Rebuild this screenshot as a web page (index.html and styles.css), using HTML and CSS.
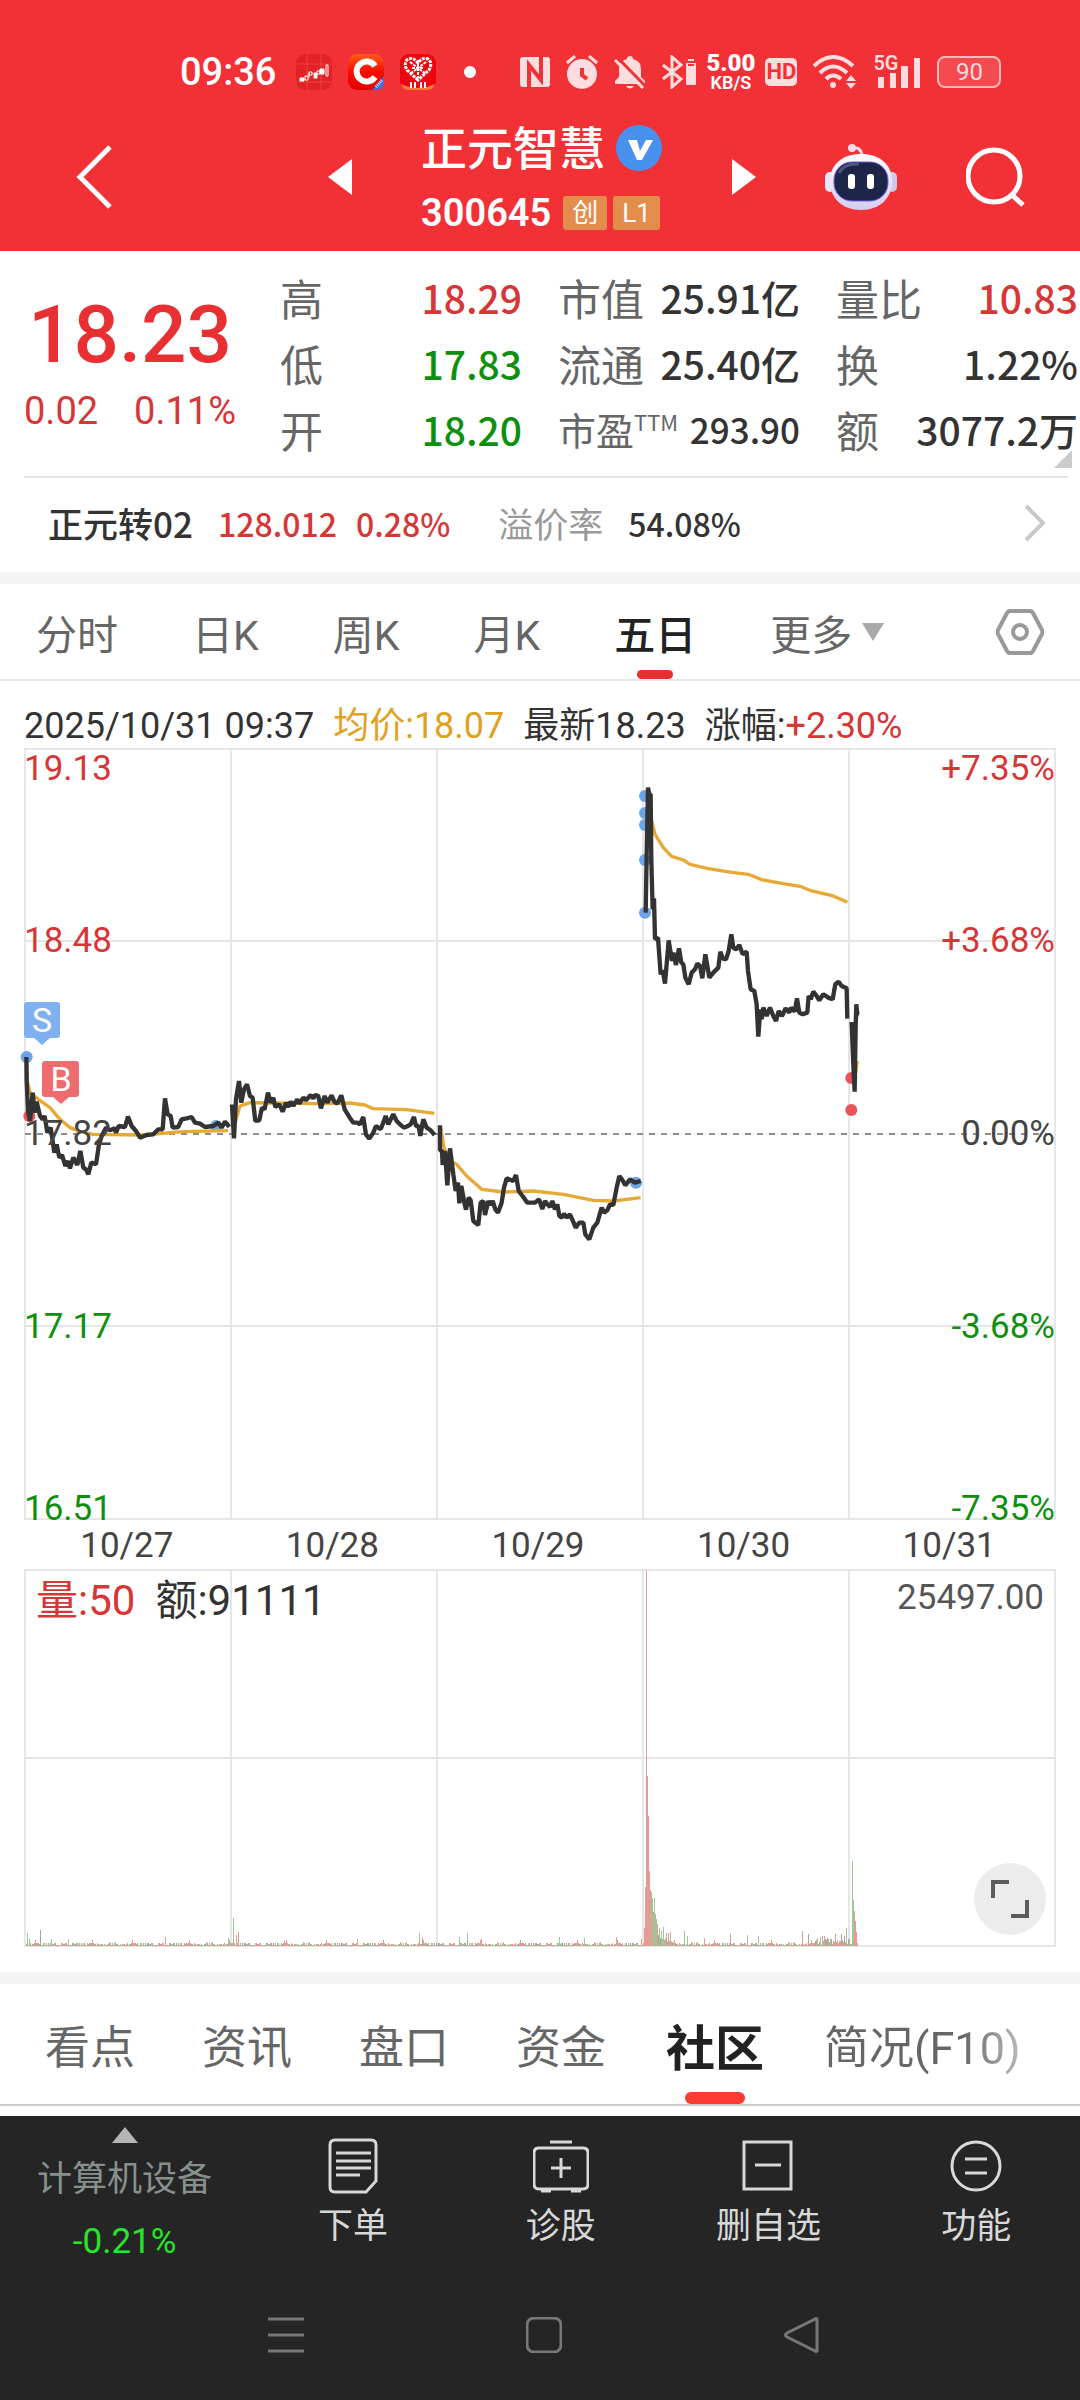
FILE: index.html
```html
<!DOCTYPE html>
<html lang="zh-CN">

<head>
    <meta charset="UTF-8">
    <meta name="viewport" content="width=device-width, initial-scale=1.0">
    <title>正元智慧 300645</title>
    <link rel="stylesheet" href="styles.css">
</head>

<body>

    <!-- Red header: status bar + stock title -->
    <header class="top">
        <div class="status-bar">
            <span class="clock">09:36</span>
            <svg class="app-icon" viewBox="0 0 36 36">
                <rect width="36" height="36" rx="9" fill="#e32227" />
                <path d="M0 10h36M0 28h36M11 0v36M25 0v36" stroke="#ea4044" stroke-width="1" />
                <path d="M4 24h4v3H4zM13 19v5M18 19h3v5h-3zM24 15h4v5h-4z" fill="#fff" stroke="#fff" />
                <path d="M9 22h3v4H9zM13 18h3v3h-3zM21 17h3v3h-3zM30 11h2v11h-2z" fill="none" stroke="#fff" />
            </svg>
            <svg class="app-icon" viewBox="0 0 36 36">
                <defs>
                    <linearGradient id="orange" x1="0" y1="0" x2="0" y2="1">
                        <stop offset="0" stop-color="#ff5a1c" />
                        <stop offset=".5" stop-color="#f80d00" />
                        <stop offset="1" stop-color="#e60000" />
                    </linearGradient>
                </defs>
                <rect width="36" height="36" rx="9" fill="url(#orange)" />
                <path d="M27 12a10 10 0 1 0 0 11" fill="none" stroke="#fff" stroke-width="6" />
                <path d="M36 22v6q0 8-8 8h-4z" fill="#3f6fe0" />
                <path d="M28 33l6-7" stroke="#c9d8ff" stroke-width="3" stroke-dasharray="1 1" />
            </svg>
            <svg class="app-icon" viewBox="0 0 36 36">
                <rect width="36" height="36" rx="9" fill="#ee0510" />
                <path d="M1 30q17 8 34 0-2 6-8 6H9q-6 0-8-6z" fill="#ff7a3c" />
                <path d="M18 26L7 16q-4-7 1-11 6-2 10 4 4-6 10-4 5 4 1 11z" fill="none" stroke="#fff" stroke-width="3" stroke-dasharray="3 1" />
                <path d="M10 8l16 12M26 8L10 20M12 14h12M18 10v14" stroke="#fff" stroke-width="2" stroke-dasharray="3 1" />
                <path d="M11 28v6M15 28v6M21 28v6M25 28v6" stroke="#fff" stroke-width="2" />
            </svg>
            <span class="dot"></span>
            <svg class="st nfc" viewBox="0 0 30 30">
                <rect width="30" height="30" rx="3" />
                <path d="M9 30V8l12 15V0" fill="none" stroke="#f23137" stroke-width="4" />
            </svg>
            <svg class="st" viewBox="0 0 32 34">
                <circle cx="16" cy="19" r="15" />
                <path d="M1 8l8-7M31 8l-8-7" stroke="#ffdcdd" stroke-width="3" />
                <path d="M16 13v7l5 4" fill="none" stroke="#f23137" stroke-width="4" />
            </svg>
            <svg class="st" viewBox="0 0 32 34">
                <path d="M1 29v-3l4-4v-8q0-8 8-10 0-3 3-3t3 3q8 2 8 10v8l4 4v3zM12 31h8q-4 5-8 0z" />
                <path d="M3 2l29 30" stroke="#f23137" stroke-width="3" />
                <path d="M1 5l28 28" stroke="#ffdcdd" stroke-width="3" />
            </svg>
            <svg class="st bt" viewBox="0 0 34 34">
                <path d="M1 10l18 14-9 8V2l9 8L1 24" fill="none" stroke="#ffdcdd" stroke-width="3" />
                <path d="M26 4h6v2h-6zM24 8h10v22H24z" />
                <path d="M26 10h6" stroke="#f23137" stroke-width="2" />
            </svg>
            <span class="net-speed"><b>5.00</b>KB/S</span>
            <span class="hd">HD</span>
            <svg class="st wifi" viewBox="0 0 44 34">
                <path d="M1 11q19-18 39 0M7 18q13-13 27 0M13 24q7-7 15 0" fill="none" stroke="#ffdcdd" stroke-width="4" />
                <circle cx="20" cy="30" r="3" />
                <path d="M33 26l5-6 5 6zM33 28h10l-5 6z" />
            </svg>
            <span class="signal">
                <small>5G</small>
                <svg viewBox="0 0 48 34">
                    <path d="M5 22h6v11H5zM17 18h6v15h-6zM28 11h7v22h-7zM41 3h6v30h-6z" fill="#ffdcdd" />
                </svg>
            </span>
            <span class="battery">90</span>
        </div>

        <div class="title-bar">
            <button class="icon-btn back" aria-label="返回">
                <svg width="36" height="64" viewBox="0 0 36 64"><path d="M34 2L4 32l30 30" fill="none" stroke="#fff" stroke-width="5" /></svg>
            </button>
            <button class="icon-btn" aria-label="上一只">
                <svg width="24" height="36" viewBox="0 0 24 36"><path d="M24 0v36L0 18z" fill="#fff" /></svg>
            </button>
            <div class="stock">
                <h1>正元智慧
                    <svg width="47" height="47" viewBox="0 0 47 47">
                        <circle cx="23" cy="23" r="23" fill="#4891ee" />
                        <path d="M12 15h9l3 11 6-11h7L26 35h-5z" fill="#fff" />
                    </svg>
                </h1>
                <p><span class="num">300645</span><span class="tag">创</span><span class="tag">L1</span></p>
            </div>
            <button class="icon-btn" aria-label="下一只">
                <svg width="24" height="36" viewBox="0 0 24 36"><path d="M0 0v36l24-18z" fill="#fff" /></svg>
            </button>
            <button class="icon-btn" aria-label="智能助手">
                <svg width="72" height="68" viewBox="0 0 72 68">
                    <defs>
                        <linearGradient id="shell" x1="0" y1="0" x2="0" y2="1">
                            <stop offset="0" stop-color="#fff" />
                            <stop offset="1" stop-color="#d3cdf0" />
                        </linearGradient>
                    </defs>
                    <path d="M27 5q9-2 10 8" fill="none" stroke="#f3dcea" stroke-width="3" />
                    <circle cx="27" cy="5" r="4" fill="#f7dbe8" />
                    <rect y="29" width="10" height="20" rx="5" fill="#e7e6f8" />
                    <rect x="62" y="29" width="10" height="20" rx="5" fill="#cfc9ee" />
                    <path d="M36 11C54 11 67 21 67 38S55 67 36 67 5 55 5 38 18 11 36 11z" fill="url(#shell)" />
                    <rect x="9" y="19" width="54" height="39" rx="18" fill="#1d2549" stroke="#7a5be0" stroke-width="1" />
                    <path d="M14 30q5-10 20-9" fill="none" stroke="#4b5680" stroke-width="3" />
                    <rect x="23" y="31" width="7" height="15" rx="3" fill="#fff" />
                    <rect x="42" y="31" width="7" height="15" rx="3" fill="#fff" />
                </svg>
            </button>
            <button class="icon-btn" aria-label="搜索">
                <svg width="60" height="60" viewBox="0 0 60 60">
                    <circle cx="28" cy="29" r="26" fill="none" stroke="#fff" stroke-width="5" />
                    <path d="M46 48l11 10" stroke="#fff" stroke-width="5" />
                </svg>
            </button>
        </div>
    </header>

    <!-- Quote figures -->
    <section class="quote">
        <div class="price up">
            <strong>18.23</strong>
            <p><span>0.02</span><span>0.11%</span></p>
        </div>
        <dl class="facts">
            <div><dt>高</dt><dd class="num up">18.29</dd></div>
            <div><dt>低</dt><dd class="num down">17.83</dd></div>
            <div><dt>开</dt><dd class="num down">18.20</dd></div>
        </dl>
        <dl class="facts">
            <div><dt>市值</dt><dd class="num">25.91亿</dd></div>
            <div><dt>流通</dt><dd class="num">25.40亿</dd></div>
            <div class="small"><dt>市盈<sup>TTM</sup></dt><dd class="num">293.90</dd></div>
        </dl>
        <dl class="facts">
            <div><dt>量比</dt><dd class="num up">10.83</dd></div>
            <div><dt>换</dt><dd class="num">1.22%</dd></div>
            <div><dt>额</dt><dd class="num">3077.2万</dd></div>
        </dl>
        <span class="corner"></span>
    </section>

    <!-- Convertible bond -->
    <a class="bond" href="#bond">
        <span class="bond-name">正元转02</span>
        <span class="num up">128.012</span>
        <span class="num up bond-rate">0.28%</span>
        <span class="muted">溢价率</span>
        <span class="num">54.08%</span>
        <svg width="22" height="38" viewBox="0 0 22 38"><path d="M2 2l17 17L2 36" fill="none" stroke="#c8c8c8" stroke-width="4" /></svg>
    </a>

    <nav class="period-tabs">
        <button>分时</button>
        <button>日K</button>
        <button>周K</button>
        <button>月K</button>
        <button class="active">五日</button>
        <button class="more">更多<svg width="22" height="18" viewBox="0 0 22 18"><path d="M0 0h22L11 18z" fill="#a9a9a9" /></svg></button>
        <button class="settings" aria-label="设置">
            <svg width="48" height="46" viewBox="0 0 48 46">
                <path d="M14 2h20q2 0 3 2l9 17q1 2 0 4l-9 17q-1 2-3 2H14q-2 0-3-2L2 25q-1-2 0-4l9-17q1-2 3-2z" fill="none" stroke="#999" stroke-width="4" />
                <circle cx="24" cy="23" r="7" fill="none" stroke="#999" stroke-width="4" />
            </svg>
        </button>
    </nav>

    <!-- Five day chart -->
    <main class="charts">
        <p class="chart-info">
            <span>2025/10/31 09:37</span>
            <span class="avg">均价:18.07</span>
            <span>最新18.23</span>
            <span>涨幅:<em>+2.30%</em></span>
        </p>

        <svg class="chart" viewBox="0 0 1032 772">
            <path class="grid" d="M1 1h1030v770H1zM1 193h1030M1 578h1030M207 1v770M413 1v770M619 1v770M825 1v770" />
            <path class="zero" d="M1 386h1030" />

            <!-- three units to a pixel inside these groups -->
            <g class="day" transform="translate(-24 233) scale(.3333)">
                <circle class="sell" cx="80" cy="228" r="18" />
                <circle class="buy" cx="88" cy="405" r="18" />
                <circle class="sell" cx="648" cy="435" r="18" />
                <polyline class="avg-line" points="80,240 82,300 90,335 115,355 150,380 180,415 210,440 240,452 280,460 420,462 500,456 550,452 684,449" />
                <polyline class="avg-line" points="702,440 710,410 720,375 750,365 950,368 1050,366 1095,372 1120,383 1220,386 1303,397" />
                <polyline class="price-line" points="79,228 80,300 84,390 90,420 98,335 104,395 110,362 120,405 128,415 134,405 142,455 152,440 163,515 170,490 178,530 186,522 196,555 204,540 210,562 220,530 232,552 241,510 250,560 258,565 265,580 274,545 288,550 297,490 305,465 318,440 330,448 345,442 348,455 356,435 375,438 384,407 395,435 408,450 420,470 440,462 460,460 475,445 488,445 495,352 503,400 512,405 518,440 535,438 545,415 560,412 575,408 585,425 600,428 615,438 640,435 655,425 665,440 675,422 688,438" />
                <polyline class="price-line" points="696,370 702,472 708,355 717,300 724,365 732,325 741,310 750,345 758,350 766,420 778,418 786,380 794,385 804,335 812,365 820,350 826,378 838,370 848,392 858,365 865,378 872,362 880,375 892,355 898,368 910,350 918,358 932,342 940,352 946,342 955,345 963,382 974,345 982,365 995,343 1003,362 1012,368 1024,343 1034,385 1048,408 1060,425 1072,425 1080,430 1090,408 1098,460 1108,473 1120,455 1128,435 1142,445 1150,425 1157,405 1165,430 1180,400 1190,420 1200,430 1212,440 1222,436 1232,430 1242,408 1248,435 1256,435 1261,465 1270,415 1280,440 1292,448 1304,462" />
            </g>
            <g class="day" transform="translate(396 253) scale(.3333)">
                <circle class="sell" cx="648" cy="545" r="18" />
                <polyline class="avg-line" points="62,378 72,440 85,475 110,490 140,525 185,565 250,573 340,570 430,580 520,598 580,600 662,590" />
                <polyline class="price-line" points="60,373 60,448 66,450 68,492 75,450 82,553 90,442 100,520 107,570 114,545 118,607 124,555 132,600 138,626 146,590 152,598 160,660 175,672 182,605 190,600 195,642 205,600 212,612 218,600 226,625 234,635 245,605 252,560 260,532 280,540 288,522 296,570 310,588 322,605 345,605 357,595 367,624 375,600 384,612 390,618 397,600 405,625 412,610 418,645 426,650 432,638 440,650 450,640 458,658 467,680 478,665 490,665 496,700 508,715 520,680 532,665 545,620 552,635 562,628 570,610 580,612 590,560 598,525 606,535 616,553 630,535 645,545 662,540" />
            </g>
            <g class="day" transform="translate(596 13) scale(.3333)">
                <circle class="sell" cx="75" cy="105" r="18" />
                <circle class="sell" cx="75" cy="156" r="18" />
                <circle class="sell" cx="75" cy="192" r="18" />
                <circle class="sell" cx="75" cy="297" r="18" />
                <circle class="sell" cx="75" cy="455" r="18" />
                <circle class="buy" cx="694" cy="951" r="18" />
                <circle class="buy" cx="694" cy="1047" r="18" />
                <polyline class="avg-line" points="88,130 94,175 105,220 130,260 155,286 190,297 210,310 265,323 335,334 385,340 425,356 490,368 540,376 575,390 640,405 682,424" />
                <polyline class="avg-line" points="697,800 705,950 712,900" />
                <polyline class="price-line" points="77,455 80,280 84,80 88,100 92,100 94,300 98,445 102,412 105,535 114,530 122,640 128,628 135,668 146,538 156,600 160,575 168,612 177,562 184,605 190,610 196,650 206,670 215,635 225,625 232,608 240,615 247,652 256,580 263,620 268,650 280,635 295,620 301,572 308,592 318,595 326,570 334,520 340,560 348,565 358,552 368,580 380,572 384,630 392,685 403,690 410,730 415,827 421,745 425,775 430,740 440,765 450,740 460,765 468,780 476,750 486,765 497,742 508,755 513,740 524,752 531,712 538,755 548,760 562,755 566,705 572,715 580,692 590,705 598,718 610,700 625,710 638,715 646,670 656,662 665,675 680,682 682,773" />
                <polyline class="price-line" points="695,783 700,910 704,992 707,800 709,730 712,760 717,762" />
            </g>

            <text class="up" x="0" y="32">19.13</text>
            <text class="up" x="0" y="204">18.48</text>
            <text x="0" y="397">17.82</text>
            <text class="down" x="0" y="590">17.17</text>
            <text class="down" x="0" y="772">16.51</text>
            <g text-anchor="end">
                <text class="up" x="1031" y="32">+7.35%</text>
                <text class="up" x="1031" y="204">+3.68%</text>
                <text x="1031" y="397">0.00%</text>
                <text class="down" x="1031" y="590">-3.68%</text>
                <text class="down" x="1031" y="772">-7.35%</text>
            </g>

            <g class="marker">
                <path fill="#7fb1f0" d="M3 254h30q3 0 3 3v30q0 3-3 3h-7l-8 7-8-7H3q-3 0-3-3v-30q0-3 3-3z" />
                <text x="18" y="284">S</text>
                <path fill="#ee6c6e" d="M21 313h31q3 0 3 3v30q0 3-3 3h-7l-8 7-8-7h-8q-3 0-3-3v-30q0-3 3-3z" />
                <text x="37" y="343">B</text>
            </g>
        </svg>

        <div class="dates">
            <span>10/27</span>
            <span>10/28</span>
            <span>10/29</span>
            <span>10/30</span>
            <span>10/31</span>
        </div>

        <div class="volume">
            <svg class="chart" viewBox="0 0 1032 378">
                <path class="grid" d="M1 1h1030v376H1zM1 189h1030M207 1v376M413 1v376M619 1v376M825 1v376" />
                <g id="bars"></g>
            </svg>
            <p class="volume-info"><span class="up">量:50</span><span>额:91111</span></p>
            <span class="volume-max">25497.00</span>
            <button class="expand" aria-label="全屏">
                <svg width="38" height="38" viewBox="0 0 38 38"><path d="M2 18V2h16M36 20v16H20" fill="none" stroke="#5c5c5c" stroke-width="4" /></svg>
            </button>
        </div>
    </main>

    <nav class="info-tabs">
        <button>看点</button>
        <button>资讯</button>
        <button>盘口</button>
        <button>资金</button>
        <button class="active">社区</button>
        <button class="fade">简况(F10)</button>
    </nav>

    <!-- Bottom toolbar -->
    <footer class="bottom">
        <div class="toolbar">
            <button class="sector">
                <svg width="26" height="16" viewBox="0 0 26 16"><path d="M13 0l13 16H0z" fill="#b5b5b5" /></svg>
                <span>计算机设备</span>
                <b>-0.21%</b>
            </button>
            <button>
                <svg width="56" height="56" viewBox="0 0 56 56">
                    <path d="M10 2h36q5 0 5 5v36L41 54H10q-5 0-5-5V7q0-5 5-5zM11 15h35M11 23h35M11 30h35M11 37h24" />
                </svg>
                下单
            </button>
            <button>
                <svg width="56" height="56" viewBox="0 0 56 56">
                    <path d="M17 4h22M6 10h44q5 0 5 5v31q0 5-5 5H6q-5 0-5-5V15q0-5 5-5zM28 20v20M18 30h20M8 53h10M38 53h10" />
                </svg>
                诊股
            </button>
            <button>
                <svg width="56" height="56" viewBox="0 0 56 56">
                    <path d="M4 4h47v47H4zM15 27h26" />
                </svg>
                删自选
            </button>
            <button>
                <svg width="56" height="56" viewBox="0 0 56 56">
                    <circle cx="28" cy="28" r="24" />
                    <path d="M17 21h22M17 35h22" />
                </svg>
                功能
            </button>
        </div>
        <div class="system-nav">
            <svg viewBox="0 0 36 36"><path d="M0 2h36M0 18h36M0 34h36" /></svg>
            <svg viewBox="0 0 36 36"><rect x="1" y="1" width="34" height="34" rx="7" /></svg>
            <svg viewBox="0 0 36 36"><path d="M33 2v32q-1 1-2 0L3 20q-3-2 0-4L31 2q1-1 2 0z" /></svg>
        </div>
    </footer>

    <script src="chart.js"></script>
</body>

</html>
```
FILE: styles.css
```css
* {
    margin: 0;
    padding: 0;
    box-sizing: border-box;
}

body {
    background-color: white;
    color: #333;
    font-family: Roboto, "Noto Sans CJK SC", sans-serif;
}

button {
    background: none;
    border: none;
    color: inherit;
    font: inherit;
    cursor: pointer;
}

svg {
    display: block;
}

.up {
    color: #d63636;
    fill: #d63636;
}

.down {
    color: #0f8f0f;
    fill: #0f8f0f;
}

/* Figures used for prices */
.num {
    font-weight: 500;
}

/* Header */
.top {
    background-color: #f23137;
    color: white;
    height: 251px;
    padding-top: 52px;
}

/* Status bar */
.status-bar {
    display: flex;
    align-items: center;
    gap: 16px;
    height: 40px;
    padding-left: 180px;
}

.clock {
    font-size: 38px;
    font-weight: 500;
    margin-right: 4px;
}

.app-icon {
    width: 36px;
    height: 36px;
}

.dot {
    width: 12px;
    height: 12px;
    margin: 0 28px 0 12px;
    border-radius: 50%;
    background-color: white;
}

.st {
    width: 32px;
    height: 34px;
    fill: #ffdcdd;
}

.nfc {
    width: 30px;
}

.bt {
    width: 34px;
}

.wifi {
    width: 44px;
}

.net-speed {
    display: flex;
    flex-direction: column;
    align-items: center;
    margin: 0 -6px;
    font-size: 18px;
    line-height: 18px;
    font-weight: 600;
}

.net-speed b {
    font-size: 24px;
    line-height: 22px;
}

.hd {
    width: 32px;
    height: 28px;
    border-radius: 5px;
    background-color: #ffdcdd;
    color: #f23137;
    font-size: 22px;
    line-height: 28px;
    font-weight: 700;
    text-align: center;
}

.signal {
    position: relative;
    width: 48px;
    height: 34px;
    color: #ffdcdd;
}

.signal small {
    position: absolute;
    left: 0;
    top: 0;
    font-size: 20px;
    line-height: 16px;
    font-weight: 600;
}

.battery {
    width: 64px;
    height: 32px;
    border: 2px solid #ffb9bb;
    border-radius: 8px;
    background-color: #f54a50;
    color: #ffdcdd;
    font-size: 24px;
    line-height: 28px;
    text-align: center;
}

/* Stock title */
.title-bar {
    display: flex;
    align-items: center;
    gap: 69px;
    height: 159px;
    padding: 10px 54px 0 76px;
}

.icon-btn.back {
    margin-right: auto;
}

.stock {
    padding-top: 8px;
}

.stock h1 {
    display: flex;
    align-items: center;
    gap: 11px;
    font-size: 46px;
    line-height: 64px;
    font-weight: 500;
}

.stock p {
    display: flex;
    align-items: center;
    gap: 6px;
    line-height: 64px;
}

.stock .num {
    font-size: 38px;
    font-weight: 600;
    margin-right: 6px;
}

.tag {
    height: 34px;
    padding: 0 9px;
    border-radius: 3px;
    background-color: #e38d4c;
    font-size: 26px;
    line-height: 34px;
}

/* Quote figures */
.quote {
    position: relative;
    display: flex;
    gap: 36px;
    height: 225px;
    padding: 13px 2px 0 24px;
}

.price {
    width: 220px;
    padding-right: 8px;
    text-align: center;
}

.price strong {
    display: block;
    margin-top: 21px;
    font-size: 80px;
    line-height: 100px;
    font-weight: 500;
    color: #e83033;
}

.price p {
    display: flex;
    justify-content: space-between;
    font-size: 38px;
    line-height: 52px;
    font-weight: 400;
}

.facts,
.bond {
    font-family: "Noto Sans CJK SC", sans-serif;
}

.facts {
    flex: 1;
}

.facts div {
    display: flex;
    justify-content: space-between;
    white-space: nowrap;
    font-size: 43px;
    line-height: 66px;
}

.facts dt {
    color: #666;
}

.facts .num {
    font-size: 39px;
}

.facts .small {
    font-size: 38px;
}

.facts .small .num {
    font-size: 35px;
}

.facts sup {
    font-size: 22px;
    line-height: 22px;
}

.corner {
    position: absolute;
    right: 8px;
    bottom: 8px;
    border-left: 18px solid transparent;
    border-bottom: 18px solid #ccc;
}

/* Convertible bond row */
.bond {
    display: flex;
    align-items: center;
    height: 96px;
    margin: 0 12px 0 24px;
    padding: 0 22px 5px 24px;
    border-top: 2px solid #e5e5e5;
    color: #333;
    font-size: 35px;
    line-height: 50px;
    text-decoration: none;
}

.bond > span {
    margin-right: 25px;
}

.bond-name {
    font-weight: 500;
}

.bond .num {
    font-size: 32px;
}

.bond > .up {
    margin-right: 19px;
}

.bond .bond-rate {
    margin-right: 48px;
}

.bond .muted {
    color: #999;
}

.bond svg {
    margin-left: auto;
}

/* Period tabs */
.period-tabs {
    display: flex;
    gap: 74px;
    height: 109px;
    padding: 0 36px;
    border-top: 12px solid #f4f4f4;
    border-bottom: 2px solid #e8e8e8;
    color: #666;
    font-size: 41px;
}

.period-tabs button,
.info-tabs button {
    position: relative;
    white-space: nowrap;
}

.period-tabs .active {
    color: #222;
    font-weight: 500;
}

.period-tabs .active::after,
.info-tabs .active::after {
    content: "";
    position: absolute;
    left: 50%;
    bottom: 0;
    width: 36px;
    height: 9px;
    margin-left: -18px;
    border-radius: 5px;
    background-color: #e83033;
}

.more {
    display: flex;
    align-items: center;
    gap: 10px;
}

.settings {
    margin-left: auto;
}

/* Charts */
.charts {
    padding: 21px 24px 25px;
}

.chart-info {
    display: flex;
    gap: 19px;
    height: 46px;
    font-size: 36px;
    line-height: 48px;
    white-space: nowrap;
}

.chart-info .avg {
    color: #e0a020;
}

.chart-info em {
    color: #d63636;
    font-style: normal;
}

.chart {
    width: 100%;
    height: auto;
    overflow: visible;
}

.chart text {
    font-size: 35px;
}

.chart text:not([class]) {
    fill: #444;
}

.chart .marker text {
    fill: white;
    font-size: 34px;
    text-anchor: middle;
}

.grid {
    fill: none;
    stroke: #e6e6e6;
    stroke-width: 2;
}

.zero {
    stroke: #8c8c8c;
    stroke-width: 2;
    stroke-dasharray: 6 6;
}

.day polyline {
    fill: none;
    stroke-width: 13;
    stroke-linejoin: bevel;
}

.price-line {
    stroke: #333;
}

.day .avg-line {
    stroke: #e6a935;
    stroke-width: 10;
}

.sell {
    fill: #6ba5e8;
}

.buy {
    fill: #e85558;
}

.dates {
    display: flex;
    height: 49px;
    padding-right: 4px;
    color: #444;
    font-size: 35px;
    line-height: 52px;
}

.dates span {
    flex: 1;
    text-align: center;
}

.volume {
    position: relative;
}

/* Readouts lie over the volume bars */
.volume-info {
    position: absolute;
    left: 12px;
    top: 7px;
    display: flex;
    gap: 20px;
    font-size: 42px;
    line-height: 50px;
}

.volume-max {
    position: absolute;
    right: 12px;
    top: 4px;
    color: #555;
    font-size: 35px;
    line-height: 50px;
}

.expand {
    position: absolute;
    right: 10px;
    bottom: 12px;
    width: 72px;
    height: 72px;
    padding: 17px;
    border-radius: 50%;
    background-color: #ececec;
}

/* Info tabs */
.info-tabs {
    display: flex;
    gap: 67px;
    height: 134px;
    padding: 0 45px;
    border-top: 12px solid #f4f4f4;
    border-bottom: 2px solid #ccc;
    color: #666;
    font-size: 45px;
}

.info-tabs .active {
    margin: 0 -7px;
    color: #222;
    font-size: 49px;
    font-weight: 700;
}

.info-tabs .active::after {
    width: 60px;
    height: 12px;
    margin-left: -30px;
    border-radius: 6px;
    background-color: #fb3a30;
}

.info-tabs .fade {
    background: linear-gradient(90deg, #666 70%, #bbb);
    background-clip: text;
    color: transparent;
}

/* Bottom toolbar */
.bottom {
    margin-top: 10px;
    padding-bottom: 48px;
    background-color: #252525;
    color: #d8d8d8;
}

.toolbar {
    display: flex;
    height: 168px;
    font-size: 35px;
    line-height: 50px;
}

.toolbar button {
    flex: 5;
    display: flex;
    flex-direction: column;
    align-items: center;
    padding-top: 22px;
    gap: 8px;
}

.toolbar .sector {
    flex: 6;
    gap: 12px;
    padding-top: 11px;
    color: #86918d;
}

.sector b {
    color: #27e527;
    font-weight: 400;
}

.toolbar button:not(.sector) svg {
    fill: none;
    stroke: #d8d8d8;
    stroke-width: 3;
}

.system-nav {
    display: flex;
    justify-content: center;
    gap: 222px;
    padding: 33px 0 0 8px;
}

.system-nav svg {
    width: 36px;
    height: 36px;
    fill: none;
    stroke: #777;
    stroke-width: 3;
}
```
FILE: chart.js
```js
// Volume bars: [x, height, colour], r = up minute, g = down minute
const peaks = [
    [3, 13, 'g'], [5, 7, 'g'], [16, 16, 'x'], [27, 7, 'g'], [44, 7, 'g'], [141, 9, 'r'],
    [204, 8, 'g'], [209, 28, 'g'], [212, 11, 'r'], [214, 14, 'r'], [260, 5, 'r'],
    [333, 7, 'g'], [395, 13, 'g'], [398, 9, 'r'], [435, 9, 'g'], [443, 13, 'g'],
    [457, 7, 'r'], [535, 9, 'g'], [560, 8, 'g'], [592, 9, 'r'], [617, 7, 'r'],
    [621, 59, 'r'], [622, 376, 'r'], [623, 170, 'r'], [624, 130, 'r'], [625, 75, 'r'],
    [626, 56, 'r'], [627, 54, 'g'], [628, 48, 'g'], [629, 34, 'r'], [630, 48, 'g'],
    [631, 32, 'g'], [632, 27, 'g'], [633, 22, 'r'], [635, 18, 'g'], [637, 15, 'g'],
    [639, 19, 'g'], [642, 13, 'r'], [644, 13, 'r'], [646, 14, 'g'], [660, 15, 'g'],
    [663, 10, 'g'], [680, 8, 'r'], [706, 12, 'r'], [723, 11, 'g'], [734, 10, 'g'],
    [778, 15, 'r'], [784, 12, 'x'], [800, 10, 'r'], [811, 12, 'r'], [817, 12, 'x'],
    [820, 10, 'x'], [822, 18, 'g'], [828, 85, 'g'], [829, 46, 'g'], [830, 35, 'r'],
    [831, 25, 'r'], [832, 14, 'r']
];
const colours = { r: '#e59a96', g: '#9dc596', x: '#a8a8a0' };
const bars = document.getElementById('bars');

function addBar(x, height, colour) {
    const bar = document.createElementNS('http://www.w3.org/2000/svg', 'rect');
    bar.setAttribute('x', x);
    bar.setAttribute('y', 377 - height);
    bar.setAttribute('width', 1);
    bar.setAttribute('height', height);
    bar.setAttribute('fill', colours[colour]);
    bars.appendChild(bar);
}

// Quiet minutes between the peaks
for (let x = 2; x < 834; x++) {
    const day = Math.floor((x - 2) / 206);
    const n = (x * 73 + x * x * 31) % 97;
    let height = 1 + (n % 3);
    if (n > 90) height += 3;
    if (day === 3 && x < 650) height += (650 - x) / 2;
    if (day === 3 && x > 790) height += n % 8;
    addBar(x, height, n % 5 < 2 ? 'g' : n % 5 < 4 ? 'r' : 'x');
}

peaks.forEach(([x, height, colour]) => addBar(x, height, colour));
```
